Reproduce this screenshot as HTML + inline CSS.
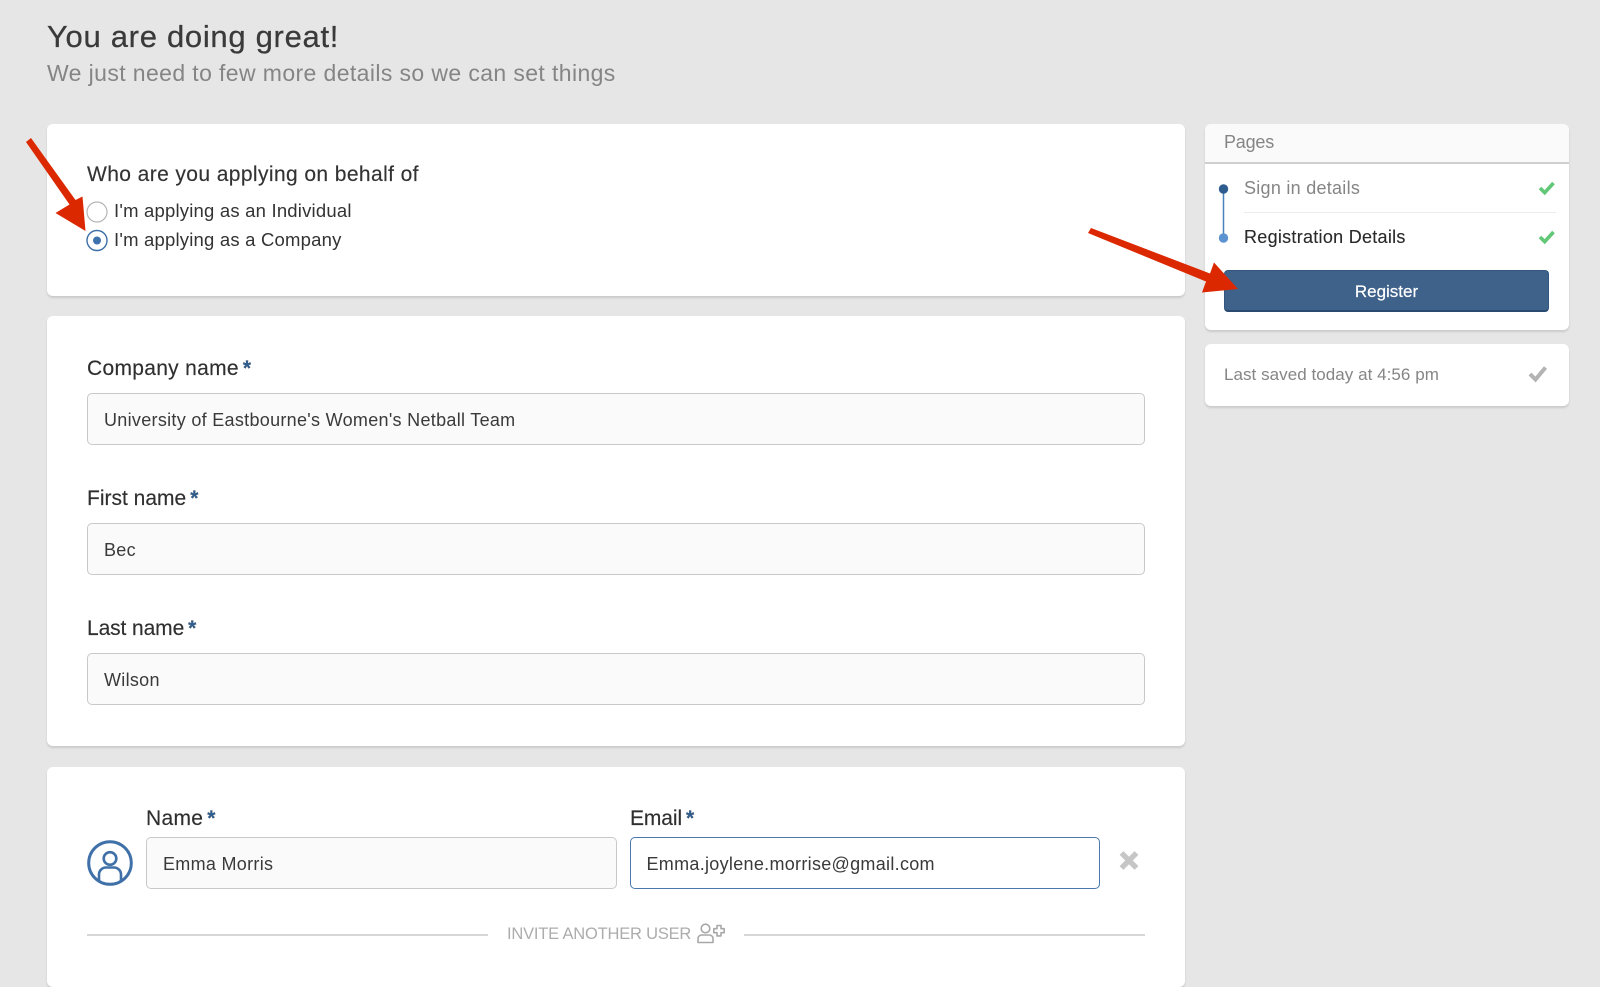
<!DOCTYPE html>
<html lang="en">
<head>
<meta charset="utf-8">
<title>You are doing great!</title>
<style>
html,body{margin:0;padding:0;}
body{width:1600px;height:964px;overflow:hidden;background:#e6e6e6;position:relative;font-family:"Liberation Sans",Arial,sans-serif;color:#333;}
.t{position:absolute;white-space:nowrap;line-height:30px;height:30px;}
.card{position:absolute;background:#fff;border-radius:6px;box-shadow:0 2px 2px rgba(0,0,0,.12);}
.input{position:absolute;box-sizing:border-box;background:#fafafa;border:1px solid #c9c9c9;border-radius:5px;height:52px;}
.lab{font-size:21px;letter-spacing:.3px;color:#2f2f2f;-webkit-text-stroke:.15px #2f2f2f;}
.lab b{color:#2f5f92;font-weight:700;margin-left:4px;letter-spacing:0;}
.val{font-size:18px;letter-spacing:.3px;color:#3a3a3a;}
.radio{font-size:18.5px;letter-spacing:.2px;color:#333;}
svg{position:absolute;}
</style>
</head>
<body>
<div class="t" style="left:47px;top:22px;font-size:31px;letter-spacing:.7px;color:#3a3a3a;-webkit-text-stroke:.25px #3a3a3a;">You are doing great!</div>
<div class="t" style="left:47px;top:58px;font-size:23px;letter-spacing:.39px;color:#858585;">We just need to few more details so we can set things</div>

<div class="card" style="left:47px;top:124px;width:1138px;height:172px;"></div>
<div class="t" style="left:87px;top:160px;font-size:21px;letter-spacing:.4px;color:#333;-webkit-text-stroke:.15px #333;">Who are you applying on behalf of</div>
<svg style="left:85px;top:200px;" width="26" height="54" viewBox="0 0 26 54">
  <circle cx="12" cy="12" r="10" fill="#fff" stroke="#b5b5b5" stroke-width="1.2"/>
  <circle cx="12" cy="40.500" r="10" fill="#fff" stroke="#3c6ea5" stroke-width="1.4"/>
  <circle cx="12" cy="40.500" r="4" fill="#3f72ad"/>
</svg>
<div class="t radio" style="left:114px;top:196px;">I'm applying as an Individual</div>
<div class="t radio" style="left:114px;top:225px;">I'm applying as a Company</div>

<div class="card" style="left:47px;top:316px;width:1138px;height:430px;"></div>
<div class="t lab" style="left:87px;top:354px;">Company name<b>*</b></div>
<div class="input" style="left:87px;top:393px;width:1058px;"></div>
<div class="t val" style="left:104px;top:405px;">University of Eastbourne's Women's Netball Team</div>
<div class="t lab" style="left:87px;top:484px;letter-spacing:0;">First name<b>*</b></div>
<div class="input" style="left:87px;top:523px;width:1058px;"></div>
<div class="t val" style="left:104px;top:535px;">Bec</div>
<div class="t lab" style="left:87px;top:614px;letter-spacing:-.1px;">Last name<b>*</b></div>
<div class="input" style="left:87px;top:653px;width:1058px;"></div>
<div class="t val" style="left:104px;top:665px;">Wilson</div>

<div class="card" style="left:47px;top:767px;width:1138px;height:220px;"></div>
<div class="t lab" style="left:146px;top:804px;">Name<b>*</b></div>
<div class="input" style="left:146px;top:837px;width:471px;"></div>
<div class="t val" style="left:163px;top:849px;">Emma Morris</div>
<div class="t lab" style="left:630px;top:804px;letter-spacing:-.1px;">Email<b>*</b></div>
<div class="input" style="left:630px;top:837px;width:470px;background:#fff;border:1px solid #4a78ad;"></div>
<div class="t val" style="left:646.500px;top:849px;">Emma.joylene.morrise@gmail.com</div>
<svg style="left:86px;top:839px;" width="48" height="48" viewBox="0 0 48 48" fill="none" stroke="#3f70a8">
  <circle cx="24" cy="24" r="21.300" stroke-width="3"/>
  <circle cx="24" cy="19.500" r="6.300" stroke-width="2.600"/>
  <path d="M13 42V35.500a7 7 0 0 1 7-7h8a7 7 0 0 1 7 7V42" stroke-width="2.600"/>
</svg>
<svg style="left:1118px;top:850px;" width="22" height="22" viewBox="0 0 22 22">
  <path d="M3.500 3L18.500 18M18.500 3L3.500 18" stroke="#c6c6c6" stroke-width="5.400"/>
</svg>
<div style="position:absolute;left:87px;top:934px;width:401px;height:2px;background:#d6d6d6;"></div>
<div style="position:absolute;left:744px;top:934px;width:401px;height:2px;background:#d6d6d6;"></div>
<div class="t" style="left:507px;top:919px;font-size:16.500px;letter-spacing:-.2px;color:#acacac;">INVITE ANOTHER USER</div>
<svg style="left:697px;top:923px;" width="28" height="22" viewBox="0 0 28 22" fill="none" stroke="#a8a8a8" stroke-width="1.600">
  <circle cx="8.500" cy="5.500" r="4.300"/>
  <path d="M1 19.500V15.500a3.500 3.500 0 0 1 3.500-3.500h8a3.500 3.500 0 0 1 3.500 3.500v4z" stroke-linejoin="round"/>
  <path d="M20 2.500h4v3.200h3.200v4h-3.200v3.200h-4v-3.200h-3.200v-4h3.200z" stroke-linejoin="round"/>
</svg>

<div class="card" style="left:1205px;top:124px;width:364px;height:206px;"></div>
<div style="position:absolute;box-sizing:border-box;left:1205px;top:124px;width:364px;height:40px;background:#fafafa;border-bottom:2px solid #cfcfcf;border-radius:6px 6px 0 0;"></div>
<div class="t" style="left:1224px;top:127px;font-size:18px;letter-spacing:-.2px;color:#858585;">Pages</div>
<svg style="left:1215px;top:180px;" width="18" height="70" viewBox="0 0 18 70">
  <line x1="8.500" y1="9" x2="8.500" y2="58" stroke="#4a82bd" stroke-width="1.500"/>
  <circle cx="8.500" cy="9" r="4.700" fill="#2f5c8f"/>
  <circle cx="8.500" cy="58" r="4.700" fill="#5b93d0"/>
</svg>
<div class="t" style="left:1244px;top:173px;font-size:18px;letter-spacing:.27px;color:#858585;">Sign in details</div>
<div style="position:absolute;left:1244px;top:212px;width:312px;height:1px;background:#ececec;"></div>
<div class="t" style="left:1244px;top:222px;font-size:18px;letter-spacing:.28px;color:#2a2a2a;-webkit-text-stroke:.12px #2a2a2a;">Registration Details</div>
<svg style="left:1538px;top:180px;" width="18" height="16" viewBox="0 0 18 16"><path d="M2 8l4.700 4.700L15.500 3" fill="none" stroke="#62c777" stroke-width="3.600"/></svg>
<svg style="left:1538px;top:229px;" width="18" height="16" viewBox="0 0 18 16"><path d="M2 8l4.700 4.700L15.500 3" fill="none" stroke="#62c777" stroke-width="3.600"/></svg>
<div style="position:absolute;box-sizing:border-box;left:1224px;top:270px;width:325px;height:42px;background:#3f628a;border:1px solid #34567e;border-bottom:2px solid #2a4a70;border-radius:4px;"></div>
<div class="t" style="left:1224px;width:325px;text-align:center;top:277px;font-size:17px;color:#fff;-webkit-text-stroke:.2px #fff;">Register</div>

<div class="card" style="left:1205px;top:344px;width:364px;height:62px;"></div>
<div class="t" style="left:1224px;top:360px;font-size:17px;letter-spacing:.05px;color:#858585;">Last saved today at 4:56 pm</div>
<svg style="left:1527px;top:364px;" width="22" height="20" viewBox="0 0 22 20"><path d="M3 10l5.500 5.500L18.500 3.500" fill="none" stroke="#b3b3b3" stroke-width="4"/></svg>

<svg style="left:0;top:0;pointer-events:none;" width="1600" height="964" viewBox="0 0 1600 964">
  <polygon fill="#dc2800" points="26,142 31,138 75.500,200 82.500,196.500 85.500,231 55.500,213 69.500,204.500"/>
  <polygon fill="#dc2800" points="1088,233 1091,228 1210,273.500 1214,262.500 1238,289 1202,292.500 1206,281.500"/>
</svg>
</body>
</html>
